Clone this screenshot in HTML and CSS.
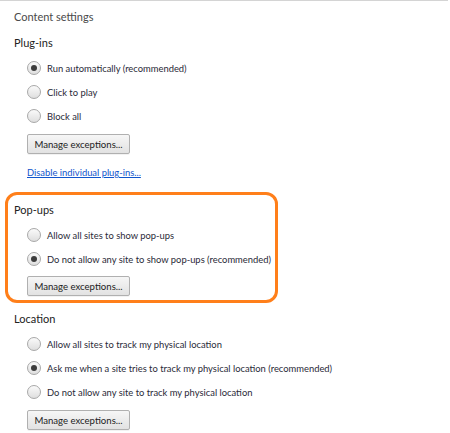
FILE: index.html
```html
<!DOCTYPE html>
<html>
<head>
<meta charset="utf-8">
<link rel="stylesheet" href="styles.css">
</head>
<body>
<div class="frame">
  <div class="page">
    <h1 class="title">Content settings</h1>

    <section class="section">
      <h2 class="heading">Plug-ins</h2>
      <div class="options">
        <label class="opt"><span class="radio on"></span>Run automatically (recommended)</label>
        <label class="opt"><span class="radio"></span>Click to play</label>
        <label class="opt"><span class="radio"></span>Block all</label>
      </div>
      <button class="btn">Manage exceptions...</button>
      <a class="link" href="#">Disable individual plug-ins...</a>
    </section>

    <section class="section highlight">
      <h2 class="heading">Pop-ups</h2>
      <div class="options">
        <label class="opt"><span class="radio"></span>Allow all sites to show pop-ups</label>
        <label class="opt"><span class="radio on"></span>Do not allow any site to show pop-ups (recommended)</label>
      </div>
      <button class="btn">Manage exceptions...</button>
    </section>

    <section class="section after">
      <h2 class="heading">Location</h2>
      <div class="options">
        <label class="opt"><span class="radio"></span>Allow all sites to track my physical location</label>
        <label class="opt"><span class="radio on"></span>Ask me when a site tries to track my physical location (recommended)</label>
        <label class="opt"><span class="radio"></span>Do not allow any site to track my physical location</label>
      </div>
      <button class="btn">Manage exceptions...</button>
    </section>
  </div>
</div>
</body>
</html>
```

FILE: styles.css
```css
html, body {
  margin: 0;
  padding: 0;
  background: #fff;
}
body {
  font-family: "Lato", "Noto Sans", sans-serif;
  font-size: 9.4px;
  color: #2a2a35;
  overflow: hidden;
}
.frame {
  width: 448px;
  height: 433px;
  border-top: 1px solid #d4d4d4;
  box-sizing: border-box;
  overflow: hidden;
}
.page {
  display: flex;
  flex-direction: column;
  padding: 7px 0 0 14px;
}
.title {
  margin: 0;
  font-size: 11px;
  font-weight: normal;
  color: #4a4a4a;
  line-height: 18px;
}
.section {
  display: flex;
  flex-direction: column;
  align-items: flex-start;
}
.heading {
  margin: 8px 0 0 0;
  font-size: 11px;
  font-weight: normal;
  color: #222;
  line-height: 18px;
}
.options {
  display: flex;
  flex-direction: column;
  margin: 6px 0 0 13px;
  gap: 4px;
}
.opt {
  display: flex;
  align-items: center;
  height: 20px;
  gap: 6px;
  color: #2a2a38;
  white-space: nowrap;
}
.radio {
  width: 12px;
  height: 12px;
  border-radius: 50%;
  border: 1px solid #a8a8a8;
  background: linear-gradient(#fafafa, #dedede);
  box-sizing: content-box;
  position: relative;
  flex: none;
}
.radio.on::after {
  content: "";
  position: absolute;
  left: 3px;
  top: 3px;
  width: 6px;
  height: 6px;
  border-radius: 50%;
  background: #3c3c3c;
}
.btn {
  margin: 8px 0 0 13px;
  height: 20px;
  width: 103px;
  padding: 0;
  font-family: inherit;
  font-size: 9.6px;
  white-space: nowrap;
  color: #222;
  border: 1px solid #b0b0b0;
  border-radius: 2px;
  background: linear-gradient(#f6f6f6, #e2e2e2);
  box-shadow: 0 1px 0 rgba(0,0,0,0.05);
}
.link {
  margin: 10px 0 0 13px;
  color: #1155cc;
  text-decoration: underline;
  line-height: 18px;
  white-space: nowrap;
}
.highlight {
  margin: 10px 0 0 -9px;
  width: 261px;
  border: 3px solid #ff7f1a;
  border-radius: 12px;
  padding: 0 0 4px 6px;
}
.highlight .heading {
  margin-top: 6px;
}
.highlight .btn {
  margin-top: 7px;
}
.after .heading {
  margin-top: 7px;
}
```
